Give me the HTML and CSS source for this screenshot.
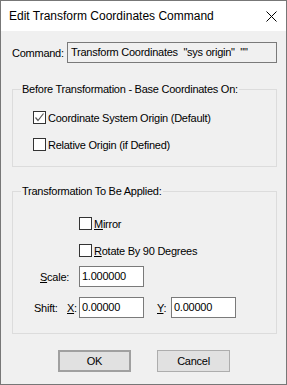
FILE: index.html
```html
<!DOCTYPE html>
<html lang="en">
<head>
    <meta charset="UTF-8">
    <title>Edit Transform Coordinates Command</title>
    <link rel="stylesheet" href="styles.css">
</head>
<body>
    <div class="window">
        <div class="titlebar">
            <span class="title">Edit Transform Coordinates Command</span>
            <svg class="close" width="11" height="11" viewBox="0 0 11 11">
                <path d="M0.5 0.5 L10.5 10.5 M10.5 0.5 L0.5 10.5" stroke="#000" stroke-width="1" fill="none"/>
            </svg>
        </div>

        <div class="dialog-body">
            <div class="command-row">
                <span class="command-label">Command:</span>
                <div class="command-box">Transform Coordinates&nbsp;&nbsp;"sys origin"&nbsp;&nbsp;""</div>
            </div>

            <fieldset class="group group-base">
                <legend>Before Transformation - Base Coordinates On:</legend>
                <div class="check first">
                    <span class="box">
                        <svg width="11" height="11" viewBox="0 0 11 11">
                            <path d="M1.5 5.5 L4 8.5 L9.5 1.5" stroke="#5a5a5a" stroke-width="1.2" fill="none"/>
                        </svg>
                    </span>
                    <span>Coordinate System Origin (Default)</span>
                </div>
                <div class="check">
                    <span class="box"></span>
                    <span>Relative Origin (if Defined)</span>
                </div>
            </fieldset>

            <fieldset class="group group-apply">
                <legend>Transformation To Be Applied:</legend>
                <div class="check first indent">
                    <span class="box"></span>
                    <span><u>M</u>irror</span>
                </div>
                <div class="check indent">
                    <span class="box"></span>
                    <span><u>R</u>otate By 90 Degrees</span>
                </div>
                <div class="field-row scale-row">
                    <span class="scale-label"><u>S</u>cale:</span>
                    <div class="text-input">1.000000</div>
                </div>
                <div class="field-row shift-row">
                    <span class="shift-label">Shift:</span>
                    <span class="axis-label"><u>X</u>:</span>
                    <div class="text-input">0.00000</div>
                    <span class="axis-label axis-y"><u>Y</u>:</span>
                    <div class="text-input">0.00000</div>
                </div>
            </fieldset>

            <div class="buttons">
                <button class="btn btn-default">OK</button>
                <button class="btn">Cancel</button>
            </div>
        </div>
    </div>
</body>
</html>
```

FILE: styles.css
```css
html, body {
    margin: 0;
    padding: 0;
    background-color: #f0f0f0;
}
body {
    font-family: "Liberation Sans", Arial, sans-serif;
    font-size: 11px;
    letter-spacing: -0.25px;
    color: #000;
}
.window {
    width: 287px;
    height: 385px;
    box-sizing: border-box;
    border: 1px solid #777;
    display: flex;
    flex-direction: column;
    background-color: #f0f0f0;
}
.titlebar {
    height: 30px;
    background-color: #fff;
    display: flex;
    align-items: center;
    justify-content: space-between;
    padding: 0 9px 0 8px;
}
.title {
    font-family: "Liberation Sans", Arial, sans-serif;
    font-size: 12px;
    letter-spacing: 0;
    color: #000;
}
.close {
    display: block;
}
.dialog-body {
    flex: 1;
    padding: 11px 9px 0 11px;
}
.command-row {
    display: flex;
    align-items: center;
    height: 21px;
}
.command-label {
    width: 55px;
}
.command-box {
    flex: 1;
    height: 21px;
    box-sizing: border-box;
    border: 1px solid #7a7a7a;
    background-color: #f0f0f0;
    padding-left: 3px;
    line-height: 19px;
    white-space: nowrap;
}
.group {
    margin: 0;
    padding: 0;
    border: 1px solid #dcdcdc;
    min-width: 0;
}
.group legend {
    margin-left: 8px;
    padding: 0 1px;
    line-height: 13px;
}
.group-base {
    margin-top: 20px;
    padding-bottom: 15px;
}
.group-apply {
    margin-top: 18px;
    padding-bottom: 15px;
}
.check {
    display: flex;
    align-items: center;
    height: 13px;
    margin-left: 20px;
    margin-top: 14px;
}
.check.first {
    margin-top: 15px;
}
.group-apply .check.first {
    margin-top: 19px;
}
.check.indent {
    margin-left: 66px;
}
.box {
    width: 13px;
    height: 13px;
    box-sizing: border-box;
    border: 1px solid #333;
    background-color: #fff;
    margin-right: 2px;
    display: flex;
    align-items: center;
    justify-content: center;
}
.box svg {
    display: block;
}
.field-row {
    display: flex;
    align-items: center;
    height: 21px;
}
.scale-row {
    margin-top: 9px;
}
.shift-row {
    margin-top: 10px;
}
.scale-label {
    margin-left: 27px;
    width: 39px;
}
.shift-label {
    margin-left: 21px;
    width: 33px;
}
.axis-label {
    width: 12px;
}
.axis-y {
    margin-left: 13px;
    width: 14px;
}
.text-input {
    width: 65px;
    height: 21px;
    box-sizing: border-box;
    border: 1px solid #7a7a7a;
    background-color: #fff;
    padding-left: 2px;
    line-height: 19px;
}
.buttons {
    display: flex;
    margin-top: 16px;
    padding-left: 46px;
    gap: 26px;
}
.btn {
    width: 73px;
    height: 22px;
    box-sizing: border-box;
    border: 1px solid #adadad;
    background-color: #e1e1e1;
    font-family: "Liberation Sans", Arial, sans-serif;
    font-size: 11px;
    letter-spacing: -0.25px;
    color: #000;
    padding: 0;
    border-radius: 0;
}
.btn-default {
    border: 2px solid #a0a0a0;
}
```
